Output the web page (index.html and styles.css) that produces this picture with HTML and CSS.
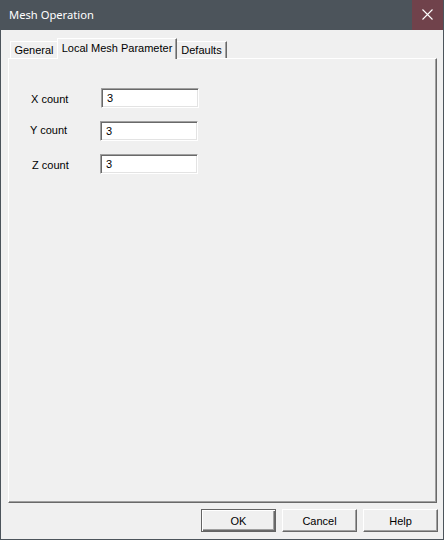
FILE: index.html
```html
<!DOCTYPE html>
<html>
<head>
<meta charset="utf-8">
<link rel="stylesheet" href="styles.css">
</head>
<body>
<div class="window">
  <div class="titlebar">
    <span class="title">Mesh Operation</span>
    <div class="close">
      <svg width="11" height="11" viewBox="0 0 11 11"><path d="M0.5 0.5 L10.5 10.5 M10.5 0.5 L0.5 10.5" stroke="#ffffff" stroke-width="1.1" fill="none"/></svg>
    </div>
  </div>
  <div class="client">
    <div class="tabs">
      <div class="tab tab-general">General</div>
      <div class="tab tab-active">Local Mesh Parameter</div>
      <div class="tab tab-defaults">Defaults</div>
    </div>
    <div class="panel">
      <div class="form">
        <div class="label lx">X count</div><div class="field fx">3</div>
        <div class="label ly">Y count</div><div class="field">3</div>
        <div class="label lz">Z count</div><div class="field">3</div>
      </div>
    </div>
    <div class="buttons">
      <div class="btn btn-default">OK</div>
      <div class="btn">Cancel</div>
      <div class="btn">Help</div>
    </div>
  </div>
</div>
</body>
</html>
```
FILE: styles.css
```css
html, body {
  margin: 0;
  padding: 0;
  background: #4c545b;
}
.window {
  width: 444px;
  height: 540px;
  box-sizing: border-box;
  background: #4c545b;
  padding: 0 1px 1px 1px;
  display: flex;
  flex-direction: column;
  font-family: "Liberation Sans", Arial, sans-serif;
  font-size: 11px;
  color: #000;
}
.titlebar {
  height: 30px;
  flex: none;
  display: flex;
  align-items: center;
  justify-content: space-between;
  padding-left: 8px;
}
.title {
  font-family: "Noto Sans", "Open Sans", sans-serif;
  font-size: 11.2px;
  color: #ffffff;
  margin-top: -1px;
}
.close {
  width: 31px;
  height: 30px;
  background: #70424b;
  display: flex;
  align-items: center;
  justify-content: center;
}
.close svg {
  display: block;
  margin-top: -1px;
}
.client {
  flex: 1;
  background: #f0f0f0;
  display: flex;
  flex-direction: column;
  padding: 8px 6px 7px 7px;
  min-height: 0;
}
.tabs {
  height: 21px;
  flex: none;
  display: flex;
  align-items: flex-end;
  padding-left: 2px;
  margin-bottom: -1px;
  position: relative;
  z-index: 1;
}
.tab {
  box-sizing: border-box;
  height: 17px;
  margin-bottom: 1px;
  border-top: 1px solid #ffffff;
  border-left: 1px solid #ffffff;
  border-right: 1px solid #696969;
  box-shadow: inset -1px 0 0 #a0a0a0;
  background: #f0f0f0;
  display: flex;
  align-items: center;
  justify-content: center;
  white-space: nowrap;
  padding-bottom: 1px;
}
.tab-general {
  width: 47px;
  border-right: none;
  box-shadow: none;
}
.tab-defaults {
  width: 50px;
  border-left: none;
}
.tab-active {
  width: 120px;
  height: 21px;
  margin-bottom: 0;
  position: relative;
  z-index: 2;
  padding-bottom: 3px;
}
.panel {
  flex: 1;
  box-sizing: border-box;
  border-top: 1px solid #ffffff;
  border-left: 1px solid #ffffff;
  border-right: 1px solid #696969;
  border-bottom: 1px solid #696969;
  box-shadow: inset -1px -1px 0 #a0a0a0;
  padding: 29px 0 0 22px;
}
.form {
  display: grid;
  grid-template-columns: 70px 98px;
  grid-auto-rows: 20px;
  row-gap: 13px;
  align-items: center;
}
.label {
  white-space: nowrap;
}
.lx { margin-top: 1px; }
.ly { margin-left: -1px; margin-top: -2px; }
.lz { margin-left: 1px; margin-top: 2px; }
.field {
  box-sizing: border-box;
  height: 20px;
  width: 98px;
  background: #ffffff;
  border: 1px solid;
  border-color: #a0a0a0 #ffffff #ffffff #a0a0a0;
  box-shadow: inset 1px 1px 0 #696969, inset -1px -1px 0 #e3e3e3;
  padding-left: 5px;
  display: flex;
  align-items: center;
  margin-left: -1px;
}
.fx {
  margin-left: 0;
}
.buttons {
  flex: none;
  display: flex;
  justify-content: flex-end;
  gap: 6px;
  margin-top: 6px;
  margin-right: -1px;
}
.btn {
  box-sizing: border-box;
  width: 75px;
  height: 23px;
  background: #f0f0f0;
  border: 1px solid;
  border-color: #ffffff #696969 #696969 #ffffff;
  box-shadow: inset -1px -1px 0 #a0a0a0;
  display: flex;
  align-items: center;
  justify-content: center;
}
.btn-default {
  border-color: #646464;
  box-shadow: inset 1px 1px 0 #ffffff, inset -1px -1px 0 #696969, inset -2px -2px 0 #a0a0a0;
}
```
